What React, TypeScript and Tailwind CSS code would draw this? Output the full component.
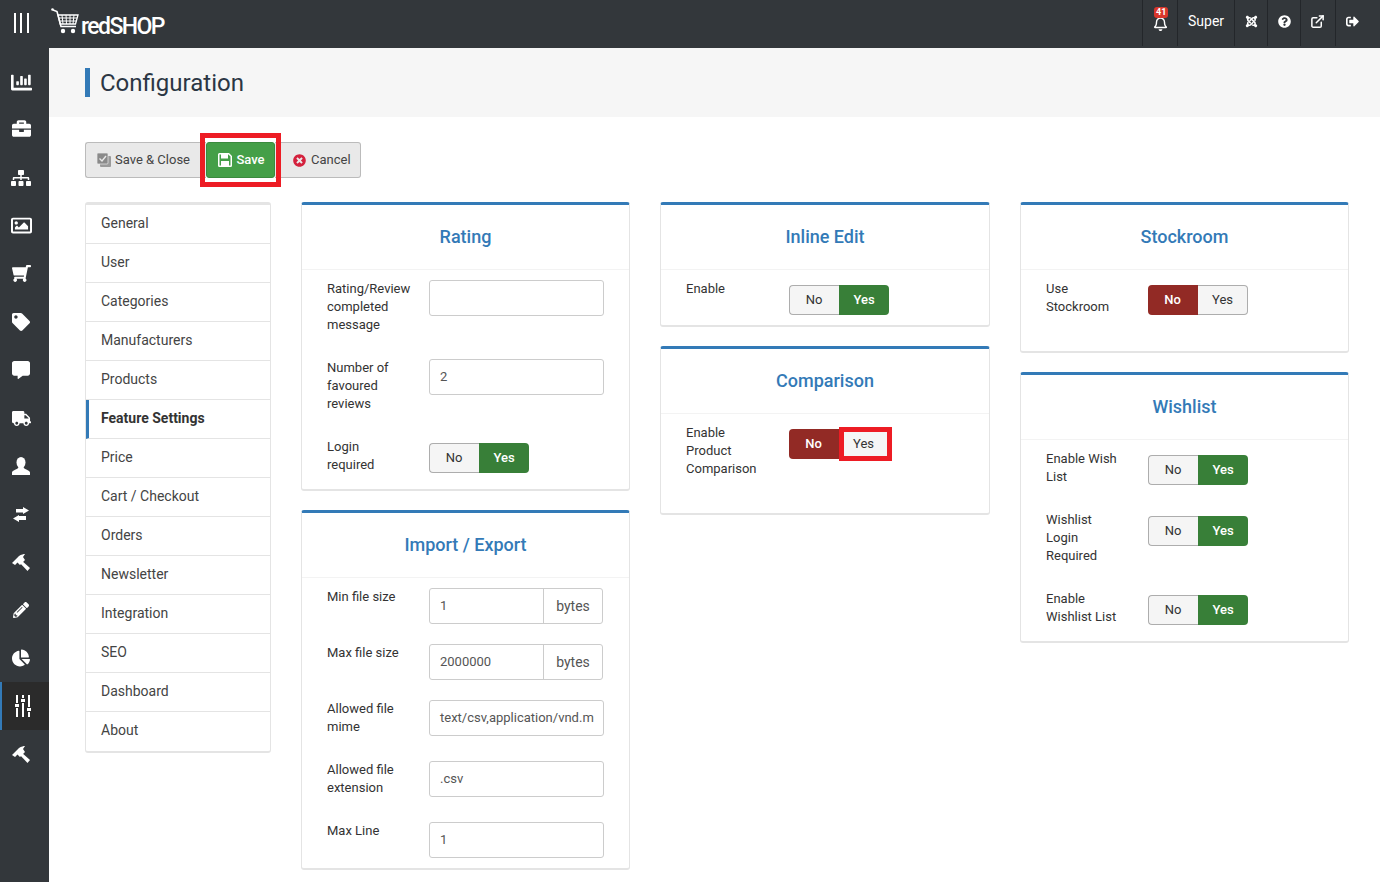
import React from "react"
import {
  FaBriefcase,
  FaChartBar,
  FaChartPie,
  FaCommentAlt,
  FaJoomla,
  FaPencilAlt,
  FaQuestionCircle,
  FaRegBell,
  FaRegImage,
  FaShoppingCart,
  FaSignOutAlt,
  FaSitemap,
  FaTag,
  FaTimesCircle,
  FaTruck,
} from "react-icons/fa"
import { ExternalLink } from "lucide-react"

const menu = [
  "General",
  "User",
  "Categories",
  "Manufacturers",
  "Products",
  "Feature Settings",
  "Price",
  "Cart / Checkout",
  "Orders",
  "Newsletter",
  "Integration",
  "SEO",
  "Dashboard",
  "About",
]

function SlidersIcon() {
  return (
    <svg width="16" height="22" viewBox="0 0 16 22" fill="white">
      <rect x="1" y="0" width="2" height="8" />
      <rect x="0" y="9" width="4" height="3" />
      <rect x="1" y="13" width="2" height="9" />
      <rect x="7" y="0" width="2" height="3" />
      <rect x="6" y="4" width="4" height="3" />
      <rect x="7" y="8" width="2" height="14" />
      <rect x="13" y="0" width="2" height="12" />
      <rect x="12" y="13" width="4" height="3" />
      <rect x="13" y="17" width="2" height="5" />
    </svg>
  )
}

function UserIcon() {
  return (
    <svg width="18" height="18" viewBox="0 0 18 18" fill="white">
      <ellipse cx="9" cy="5.5" rx="4.5" ry="5.5" />
      <path d="M0 18 V15.5 C0 13 6 12.8 6.5 10 H11.5 C12 12.8 18 13 18 15.5 V18 Z" />
    </svg>
  )
}

function ExchangeIcon() {
  return (
    <svg width="16" height="15" viewBox="0 0 16 15" fill="white">
      <path d="M3 2 H10 V0 L16 3.5 L10 7 V5.5 H3 Z" />
      <path d="M13 9 H6 V8 L0 11.5 L6 15 V13 H13 Z" />
    </svg>
  )
}

function HammerIcon() {
  return (
    <svg width="18" height="17" viewBox="0 0 18 17" fill="white">
      <path d="M0 9 L7 2 C9 0.5 12 0 13 0 L11 3 L13 6 L8 11 L5.5 8.5 L3 11 Z" />
      <path d="M9 6 L18 14 L15.5 17 L7 8 Z" />
    </svg>
  )
}

const sideIcons = [
  <FaChartBar size={21} />,
  <FaBriefcase size={19} className="-mt-[3px]" />,
  <FaSitemap size={20} className="-mt-[1px]" />,
  <FaRegImage size={21} className="-mt-[1px]" />,
  <FaShoppingCart size={19} className="-mt-[1px] -scale-x-100" />,
  <FaTag size={18} />,
  <FaCommentAlt size={18} />,
  <FaTruck size={19} />,
  <UserIcon />,
  <ExchangeIcon />,
  <HammerIcon />,
  <FaPencilAlt size={16} />,
  <FaChartPie size={18} />,
  <SlidersIcon />,
  <HammerIcon />,
]

function CartLogo() {
  return (
    <svg width="28" height="26" viewBox="0 0 28 26" fill="none" stroke="white">
      <circle cx="1.5" cy="1.5" r="1.3" fill="white" stroke="none" />
      <path d="M2 2 L6 3.5 L10 18.5 H25" strokeWidth="1.6" />
      <path d="M7 7 H27 L24.5 16 H9.2 Z" strokeWidth="1.3" />
      <path d="M11 7 L12 16 M15 7 L15.5 16 M19 7 L19 16 M23 7 L22 16 M8 10 H26 M8.5 13 H25.5" strokeWidth="1" />
      <circle cx="12" cy="23" r="2.2" fill="white" stroke="none" />
      <circle cx="22" cy="23" r="2.2" fill="white" stroke="none" />
    </svg>
  )
}

function SaveCloseIcon() {
  return (
    <svg width="14" height="14" viewBox="0 0 14 14">
      <rect x="3" y="3" width="11" height="11" rx="1" fill="#9a9a9a" />
      <rect x="0" y="0" width="11" height="11" rx="1" fill="#8a8a8a" stroke="#e9e9e9" strokeWidth="0.7" />
      <path d="M2.5 5.5 L5 8 L9 3" fill="none" stroke="#e9e9e9" strokeWidth="1.4" />
    </svg>
  )
}

function SaveIcon() {
  return (
    <svg width="14" height="14" viewBox="0 0 14 14" fill="white">
      <path d="M1.5 0 H11 L14 3 V12.5 A1.5 1.5 0 0 1 12.5 14 H1.5 A1.5 1.5 0 0 1 0 12.5 V1.5 A1.5 1.5 0 0 1 1.5 0 Z M1.5 1.5 V12.5 H12.5 V3.6 L10.4 1.5 Z" fillRule="evenodd" />
      <rect x="3" y="1" width="7" height="4.5" />
      <rect x="3" y="8" width="8" height="5" />
    </svg>
  )
}

function Toggle({ value, className = "" }: { value: "yes" | "no"; className?: string }) {
  return (
    <div className={`flex h-[30px] w-[100px] text-[13px] ${className}`}>
      <div
        className={
          value === "no"
            ? "flex w-[50px] items-center justify-center rounded-l bg-[#922a25] pr-px font-medium text-white"
            : "flex w-[50px] items-center justify-center rounded-l border border-r-0 border-[#adadad] bg-[#f5f5f5] pr-px text-[#333]"
        }
      >
        No
      </div>
      <div
        className={
          value === "yes"
            ? "flex w-[50px] items-center justify-center rounded-r bg-[#387f38] font-medium text-white"
            : "flex w-[50px] items-center justify-center rounded-r border border-l-0 border-[#adadad] bg-[#f5f5f5] text-[#333]"
        }
      >
        Yes
      </div>
    </div>
  )
}

function Card({ title, children, className = "" }: { title: string; children: React.ReactNode; className?: string }) {
  return (
    <section className="rounded-[3px] border-x border-b-2 border-t-[3px] border-x-[#e4e4e4] border-b-[#e4e4e4] border-t-[#337ab7] bg-white">
      <h3 className="flex h-[65px] items-center justify-center border-b border-[#f3f3f3] pb-[2px] text-[18px] font-medium text-[#337ab7]">
        {title}
      </h3>
      <div className={`px-[25px] pt-[10px] ${className}`}>{children}</div>
    </section>
  )
}

function Row({ label, children, className = "mb-[25px]" }: { label: React.ReactNode; children?: React.ReactNode; className?: string }) {
  return (
    <div className={`flex items-start ${className}`}>
      <label className="mr-[18px] w-[84px] shrink-0 text-[13px] leading-[18px] text-[#333]">{label}</label>
      {children}
    </div>
  )
}

function Input({ value = "" }: { value?: string }) {
  return (
    <div className="flex h-[36px] w-[175px] items-center overflow-hidden whitespace-nowrap rounded-[3px] border border-[#ccc] px-[10px] text-[13px] text-[#555]">
      {value}
    </div>
  )
}

function Bytes({ value }: { value: string }) {
  return (
    <div className="flex h-[36px] w-[174px] rounded-[3px] border border-[#ccc] text-[#555]">
      <div className="flex w-[114px] items-center border-r border-[#ccc] px-[10px] text-[13px]">{value}</div>
      <div className="flex flex-1 items-center justify-center text-[14px]">bytes</div>
    </div>
  )
}

export default function App() {
  return (
    <div className="flex h-screen flex-col overflow-hidden bg-white font-['Roboto',sans-serif] text-[#333]">
      <header className="flex h-[48px] shrink-0 items-start bg-[#33373b] text-white">
        <div className="flex h-[48px] w-[49px] shrink-0 justify-center gap-[4.5px] pr-[7px] pt-[13px]">
          <span className="h-[20px] w-[2px] bg-white" />
          <span className="h-[20px] w-[2px] bg-white" />
          <span className="h-[20px] w-[2px] bg-white" />
        </div>
        <div className="ml-[2px] flex pt-[8px]">
          <CartLogo />
          <span className="ml-[2px] mt-[5px] text-[23px] font-medium leading-[28px] tracking-[-1.6px]">redSHOP</span>
        </div>
        <div className="ml-auto mr-[1px] flex h-[46px] items-stretch">
          <div className="relative flex w-[35px] items-center justify-center border-l border-[#23262a] pb-[2px]">
            <FaRegBell size={15} className="mt-[3px]" />
            <span className="absolute left-[11px] top-[7px] rounded-[3px] bg-[#d9362b] px-[2px] text-[9px] font-bold leading-[11px] text-white">41</span>
          </div>
          <div className="flex w-[57px] items-center border-l border-[#23262a] pb-[4px] pl-[10px] text-[14px]">Super</div>
          <div className="flex w-[33px] items-center justify-center border-l border-[#23262a] pb-[4px]">
            <FaJoomla size={13} />
          </div>
          <div className="flex w-[33px] items-center justify-center border-l border-[#23262a] pb-[4px]">
            <FaQuestionCircle size={13} />
          </div>
          <div className="flex w-[35px] items-center justify-center border-l border-[#23262a] pb-[4px] pr-[2px]">
            <ExternalLink size={15} strokeWidth={2.4} />
          </div>
          <div className="flex w-[44px] items-center border-l border-[#23262a] pb-[4px] pl-[10px]">
            <FaSignOutAlt size={13} />
          </div>
        </div>
      </header>

      <div className="flex min-h-0 flex-1">
        <aside className="flex w-[49px] shrink-0 flex-col bg-[#33373b] pt-[10px] text-white">
          {sideIcons.map((icon, i) => (
            <div
              key={i}
              className={
                i === 13
                  ? "flex h-[48px] items-center justify-center border-l-2 border-[#337ab7] bg-[#2b2b2b] pr-[6px]"
                  : "flex h-[48px] items-center justify-center pr-[7px]"
              }
            >
              {icon}
            </div>
          ))}
        </aside>

        <main className="min-w-0 flex-1">
          <div className="flex h-[69px] items-center bg-[#f6f6f6] pl-[36px]">
            <h1 className="h-[29px] border-l-[5px] border-[#337ab7] pl-[10px] text-[24px] leading-[31px] text-[#2b3644]">Configuration</h1>
          </div>

          <div className="pl-[36px] pr-[31px]">
            <div className="mt-[25px] flex h-[36px] text-[13px]">
              <button className="flex w-[121px] items-center gap-[4px] rounded-l-[3px] border border-r-0 border-[#bbb] bg-[#e9e9e9] pl-[11px] text-[#444]">
                <SaveCloseIcon />
                Save &amp; Close
              </button>
              <div className="relative">
                <button className="flex h-[36px] w-[69px] items-center justify-center gap-[4px] rounded-[3px] border border-[#3a8a3e] bg-[#449f48] pl-[2px] font-medium text-white">
                  <SaveIcon />
                  Save
                </button>
                <span className="absolute -inset-x-[6px] -inset-y-[9px] border-[5px] border-[#ed1c24]" />
              </div>
              <button className="flex w-[86px] items-center gap-[5px] rounded-r-[3px] border border-l-0 border-[#bbb] bg-[#e9e9e9] pl-[18px] text-[#444]">
                <FaTimesCircle size={13} className="text-[#d4213d]" />
                Cancel
              </button>
            </div>

            <div className="mt-[24px] grid grid-cols-[186px_329px_330px_329px] items-start gap-x-[30px]">
              <nav className="rounded-[3px] border-x border-b-2 border-t-[3px] border-[#e4e4e4] bg-white text-[14px] text-[#444]">
                {menu.map((item, i) =>
                  item === "Feature Settings" ? (
                    <div key={item} className="flex h-[39px] items-center border-b border-l-[3px] border-b-[#e4e4e4] border-l-[#337ab7] pb-[2px] pl-[12px] font-bold text-[#333]">
                      {item}
                    </div>
                  ) : (
                    <div
                      key={item}
                      className={
                        i === menu.length - 1
                          ? "flex h-[39px] items-center pb-[3px] pl-[15px]"
                          : "flex h-[39px] items-center border-b border-[#e4e4e4] pb-[2px] pl-[15px]"
                      }
                    >
                      {item}
                    </div>
                  ),
                )}
              </nav>

              <div className="flex flex-col gap-[19px]">
                <Card title="Rating" className="pb-[15px]">
                  <Row label="Rating/Review completed message">
                    <Input />
                  </Row>
                  <Row label="Number of favoured reviews">
                    <Input value="2" />
                  </Row>
                  <Row label={<>Login<br />required</>} className="">
                    <Toggle value="yes" className="mt-[5px]" />
                  </Row>
                </Card>
                <Card title="Import / Export" className="pb-[10px]">
                  <Row label="Min file size" className="mb-[20px]">
                    <Bytes value="1" />
                  </Row>
                  <Row label="Max file size" className="mb-[20px]">
                    <Bytes value="2000000" />
                  </Row>
                  <Row label="Allowed file mime">
                    <Input value="text/csv,application/vnd.m" />
                  </Row>
                  <Row label="Allowed file extension">
                    <Input value=".csv" />
                  </Row>
                  <Row label="Max Line" className="">
                    <Input value="1" />
                  </Row>
                </Card>
              </div>

              <div className="flex flex-col gap-[19px]">
                <Card title="Inline Edit" className="pb-[10px]">
                  <Row label="Enable" className="">
                    <Toggle value="yes" className="ml-px mt-[5px]" />
                  </Row>
                </Card>
                <Card title="Comparison" className="pb-[35px]">
                  <Row label="Enable Product Comparison" className="">
                    <div className="relative ml-px mt-[5px]">
                      <Toggle value="no" />
                      <span className="absolute -bottom-[2px] left-[50px] -top-[2px] w-[53px] border-[5px] border-[#ed1c24]" />
                    </div>
                  </Row>
                </Card>
              </div>

              <div className="flex flex-col gap-[19px]">
                <Card title="Stockroom" className="pb-[35px]">
                  <Row label="Use Stockroom" className="">
                    <Toggle value="no" className="mt-[5px]" />
                  </Row>
                </Card>
                <Card title="Wishlist" className="pb-[15px]">
                  <Row label="Enable Wish List">
                    <Toggle value="yes" className="mt-[5px]" />
                  </Row>
                  <Row label={<>Wishlist<br />Login<br />Required</>}>
                    <Toggle value="yes" className="mt-[5px]" />
                  </Row>
                  <Row label="Enable Wishlist List" className="">
                    <Toggle value="yes" className="mt-[5px]" />
                  </Row>
                </Card>
              </div>
            </div>
          </div>
        </main>
      </div>
    </div>
  )
}
